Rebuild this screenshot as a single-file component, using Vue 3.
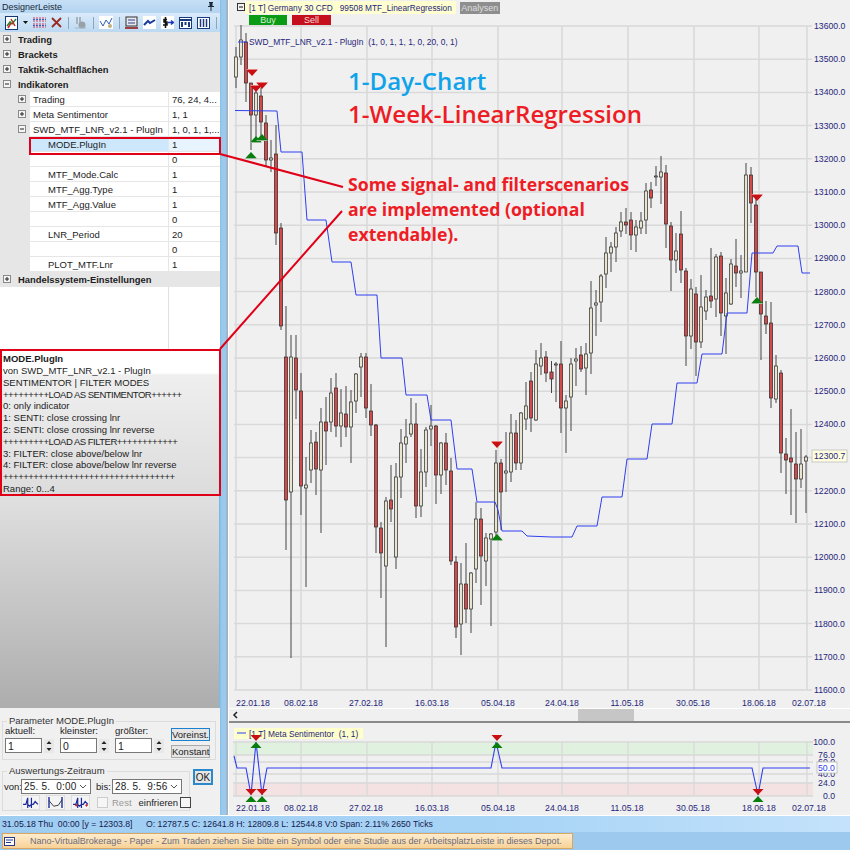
<template>
  <div class="app">
    <div class="main">
      <aside class="left">
        <div class="dock-title">
          <span>DesignerLeiste</span>
          <svg class="pin" width="8" height="9" viewBox="0 0 8 9"><path d="M2 0h4v1H5.500v3H7v1H4.500v4h-1V5H1V4h1.500V1H2z" fill="#1a2a3a" /></svg>
        </div>
        <div class="toolbar">
          <svg class="tb" width="13" height="14" viewBox="0 0 13 14"><rect x=".5" y=".5" width="12" height="13" fill="#fff" stroke="#123a70" /><path d="M2 10l3-4 2 2 4-5" fill="none" stroke="#1a8a2a" stroke-width="1.500" /><path d="M6 3l4 7M3 12l3-5" fill="none" stroke="#d02020" stroke-width="1.500" /></svg>
          <svg class="tb caret" width="5" height="3" viewBox="0 0 5 3"><path d="M0 0h5L2.500 3z" fill="#111" /></svg>
          <svg class="tb" width="13" height="12" viewBox="0 0 13 12"><path d="M0 1h13M0 4h13M0 7h13M0 10h13" stroke="#d04060" stroke-dasharray="2 1" /><path d="M0 2.500h13M0 8.500h13" stroke="#4060c0" stroke-dasharray="2 1" /></svg>
          <svg class="tb" width="11" height="11" viewBox="0 0 11 11"><path d="M1 1l9 9M10 1l-9 9" stroke="#9a2a20" stroke-width="1.800" /></svg>
          <i class="sep"></i>
          <svg class="tb" width="13" height="13" viewBox="0 0 13 13"><path d="M2 1h2v7H2zM5 1h2v6H5z" fill="#a8b4bc" /><circle cx="8" cy="9" r="3.500" fill="#98a0a8" /><path d="M1 12h11" stroke="#a8b4bc" /></svg>
          <i class="sep"></i>
          <svg class="tb" width="14" height="13" viewBox="0 0 14 13"><rect width="14" height="13" fill="#fff" /><path d="M1 5l3 5 3-6 3 4 3-6" fill="none" stroke="#3060b0" /><circle cx="11" cy="10" r="2" fill="#c0b080" /></svg>
          <i class="sep"></i>
          <svg class="tb" width="13" height="13" viewBox="0 0 13 13"><rect x="1" y="1" width="11" height="9" fill="#e8e8f0" stroke="#333" /><path d="M3 4h7M3 7h7" stroke="#304080" /><path d="M0 11h13v2H0z" fill="#a04040" /></svg>
          <svg class="tb" width="13" height="13" viewBox="0 0 13 13"><rect width="13" height="13" fill="#fff" /><path d="M1 9l4-4 2 2 5-3" fill="none" stroke="#1a3aa0" stroke-width="2" /></svg>
          <svg class="tb" width="13" height="13" viewBox="0 0 13 13"><rect width="13" height="13" fill="#fff" /><path d="M6 3.500H3v2.500h3v3H2M4.500 1v11" fill="none" stroke="#111" stroke-width="1.500" /><path d="M7 6.500h5M10 4.500l2.500 2-2.500 2" fill="none" stroke="#1a3ac0" stroke-width="1.500" /></svg>
          <svg class="tb" width="13" height="12" viewBox="0 0 13 12"><rect x=".5" y=".5" width="12" height="11" fill="#fff" stroke="#1a3a80" /><path d="M1 3h11" stroke="#1a3a80" stroke-width="2" /><path d="M3 5v5M6.500 5v3M10 5v5" stroke="#1a3a80" stroke-width="2" /></svg>
          <svg class="tb" width="13" height="12" viewBox="0 0 13 12"><rect x=".5" y=".5" width="12" height="11" fill="#fff" stroke="#1a3a80" /><path d="M3.500 2v8M6.500 2v8M9.500 2v8" stroke="#1a3a80" stroke-width="1.500" /></svg>
          <i class="sep"></i>
          <svg class="tb" width="10" height="14" viewBox="0 0 10 14"><rect x=".5" y=".5" width="9" height="13" fill="#fff" stroke="#1a3a80" /><path d="M1 3h8" stroke="#1a3a80" /><circle cx="6" cy="9" r="2.500" fill="#203060" /></svg>
        </div>

        <div class="tree">
          <div v-for="(row, i) in rows" :key="i" :class="['row', 'lvl' + row.level, { selected: row.selected }]">
            <svg v-if="row.toggle" class="toggle" width="8" height="8" viewBox="0 0 8 8">
              <rect x=".5" y=".5" width="7" height="7" fill="#f4f4f4" stroke="#8a8a8a" />
              <path :d="row.toggle === '+' ? 'M2 4h4M4 2v4' : 'M2 4h4'" stroke="#222" />
            </svg>
            <template v-if="row.level === 0">
              <span class="group-name">{{ row.label }}</span>
            </template>
            <template v-else>
              <span class="cell-name">{{ row.label }}</span>
              <span class="cell-value">{{ row.value }}</span>
            </template>
          </div>
          <div class="tree-empty"><span></span></div>
        </div>

        <div class="desc">
          <div class="desc-title">MODE.PlugIn</div>
          <div v-for="line in descLines" :key="line" :class="['desc-line', { plus: line.startsWith('+') }]">{{ line }}</div>
        </div>
        <div class="grey-fill"></div>

        <div class="params">
          <div class="param-top">
            <fieldset class="box">
              <legend>Parameter MODE.PlugIn</legend>
              <div class="spin-row">
                <div v-for="s in spins" :key="s.label" class="spin">
                  <label>{{ s.label }}</label>
                  <div class="spin-ctl">
                    <span class="field">{{ s.value }}</span>
                    <span class="arrows">
                      <svg width="10" height="7" viewBox="0 0 10 7"><path d="M5 2l2.500 3h-5z" fill="#222" /></svg>
                      <svg width="10" height="7" viewBox="0 0 10 7"><path d="M5 5L2.500 2h5z" fill="#222" /></svg>
                    </span>
                  </div>
                </div>
                <div class="param-buttons">
                  <button class="btn focus">Voreinst.</button>
                  <button class="btn">Konstant</button>
                </div>
              </div>
            </fieldset>
          </div>
          <div class="param-bottom">
            <fieldset class="box range">
              <legend>Auswertungs-Zeitraum</legend>
              <div class="date-row">
                <label class="von">von:</label>
                <span class="field date">25. 5. &nbsp;0:00
                  <svg width="8" height="5" viewBox="0 0 8 5"><path d="M1 1l3 3 3-3" fill="none" stroke="#555" /></svg>
                </span>
                <label class="bis">bis:</label>
                <span class="field date">28. 5. &nbsp;9:56
                  <svg width="8" height="5" viewBox="0 0 8 5"><path d="M1 1l3 3 3-3" fill="none" stroke="#555" /></svg>
                </span>
              </div>
              <div class="opt-row">
                <span class="mini"><svg width="18" height="14" viewBox="0 0 18 14"><path d="M1 9h3l2-7v11M6 9l2 2 2-2V2v11M10 9h2l2-3 3 3" fill="none" stroke="#1a2a9a" stroke-width="1.300" /></svg></span>
                <span class="mini"><svg width="18" height="14" viewBox="0 0 18 14"><path d="M2 1v12M16 1v12" stroke="#1a2a9a" stroke-width="1.500" /><path d="M2 5l5 6 5-1 4-6" fill="none" stroke="#333" /></svg></span>
                <span class="mini"><svg width="18" height="14" viewBox="0 0 18 14"><path d="M1 9h3l2-7v11M6 9l2 2 2-2V2v11M10 9h2l2-3 3 3" fill="none" stroke="#1a2a9a" stroke-width="1.300" /><path d="M3 10h3M14 10h3M4.500 8.500v3M15.500 8.500v3" stroke="#d02020" /></svg></span>
                <span class="check-wrap off"><i class="check"></i>Rest</span>
                <span class="check-wrap">einfrieren<i class="check dark"></i></span>
              </div>
            </fieldset>
            <button class="btn ok">OK</button>
          </div>
        </div>
      </aside>

      <div class="edge"></div>

      <section class="right">
        <div class="chart-head">
          <svg class="collapse" width="8" height="8" viewBox="0 0 8 8"><rect x=".5" y=".5" width="7" height="7" fill="#f4f4f4" stroke="#333" /><path d="M2 4h4" stroke="#111" /></svg>
          <div class="head-col">
            <div class="head-line">
              <span class="title-tag">[1 T] Germany 30 CFD &nbsp; 99508 MTF_LinearRegression</span>
              <span class="analysen">Analysen</span>
            </div>
            <div class="trade-btns">
              <span class="buy">Buy</span>
              <span class="sell">Sell</span>
            </div>
          </div>
        </div>

        <svg class="chart" width="621" height="682" viewBox="229 26 621 682">
          <rect x="229" y="26" width="621" height="682" fill="#f0f0f0" />
          <g stroke="#d9d9d9" stroke-width="1.500">
            <line v-for="p in priceAxis" :key="p.label" x1="234" x2="812" :y1="p.y" :y2="p.y" />
            <line v-for="x in gridX" :key="x" :x1="x" :x2="x" y1="26" y2="690" />
          </g>
          <g v-for="c in candles" :key="c.x">
            <line :x1="c.x" :x2="c.x" :y1="c.wt" :y2="c.wb" stroke="#444" />
            <rect :x="c.x - 1.600" :y="c.bt" width="3.200" :height="c.bb - c.bt" :fill="c.down ? '#d24a4a' : '#e8e4d0'" stroke="#2a2a2a" stroke-width="0.700" />
          </g>
          <polyline :points="mainLine" fill="none" stroke="#2f3ff0" stroke-width="1" />
          <g v-for="m in redMarks" :key="'r' + m[0] + m[1]">
            <path :d="downTri(m[0], m[1])" fill="#c80f14" />
            <rect :x="m[0] - 5.500" :y="m[1] - 4" width="11" height="1" fill="#e88080" />
          </g>
          <g v-for="m in greenMarks" :key="'g' + m[0] + m[1]">
            <path :d="upTri(m[0], m[1])" fill="#0a7d0f" />
            <rect :x="m[0] - 5.500" :y="m[1] + 3" width="11" height="1" fill="#9ab89a" />
          </g>
          <g class="axis">
            <text v-for="p in priceAxis" :key="p.label" x="814" :y="p.y + 3">{{ p.label }}</text>
            <text v-for="d in dates" :key="d.label" :x="d.x" y="706" text-anchor="middle">{{ d.label }}</text>
          </g>
          <line x1="238" x2="247" y1="42" y2="42" stroke="#2f3ff0" />
          <text class="legend" x="249" y="45">SWD_MTF_LNR_v2.1 - PlugIn &#160;(1, 0, 1, 1, 1, 0, 20, 0, 1)</text>
          <rect x="812" y="450" width="35" height="12" fill="#ffffdf" stroke="#c8c8c8" />
          <text class="axis-tag" x="814" y="459">12300.7</text>
        </svg>

        <div class="scrollbar">
          <svg width="6" height="8" viewBox="0 0 6 8"><path d="M5 1L2 4l3 3" fill="none" stroke="#222" stroke-width="1.500" /></svg>
          <div class="thumb"></div>
        </div>

        <svg class="lower" width="621" height="88" viewBox="229 726 621 88">
          <rect x="229" y="726" width="621" height="88" fill="#f0f0f0" />
          <rect x="233" y="742" width="580" height="13" fill="#e0f1df" />
          <rect x="233" y="783" width="580" height="13" fill="#f4e2e2" />
          <g stroke="#d9d9d9" stroke-width="1.300">
            <line v-for="l in lowerAxis" :key="l.label" x1="233" x2="813" :y1="l.y" :y2="l.y" />
            <line v-for="x in gridX" :key="x" :x1="x" :x2="x" y1="742" y2="796" />
          </g>
          <rect x="234" y="728" width="129" height="11" fill="#ffffcc" />
          <line x1="237" x2="246" y1="733" y2="733" stroke="#2f3ff0" />
          <text class="legend" x="249" y="737">[1 T] Meta Sentimentor &#160;(1, 1)</text>
          <polyline :points="lowerLine" fill="none" stroke="#2f3ff0" stroke-width="1.100" />
          <path v-for="x in lowerTopMarks" :key="'t' + x" :d="downTri(x, 738)" fill="#c80f14" />
          <path v-for="x in lowerTopMarks" :key="'u' + x" :d="upTri(x, 745)" fill="#0a7d0f" />
          <path v-for="x in lowerLowMarks" :key="'l' + x" :d="downTri(x, 792)" fill="#c80f14" />
          <path v-for="x in lowerLowMarks" :key="'m' + x" :d="upTri(x, 799)" fill="#0a7d0f" />
          <g class="axis">
            <text v-for="l in lowerAxis" :key="l.label" x="835" :y="l.y + 3" text-anchor="end">{{ l.label }}</text>
            <text v-for="d in dates" :key="d.label" :x="d.x" y="811" text-anchor="middle">{{ d.label }}</text>
          </g>
          <rect x="817" y="762" width="20" height="11" fill="#fff" stroke="#c4c4c4" />
          <text class="axis-tag blue" x="818" y="771">50.0</text>
        </svg>
      </section>
    </div>

    <div class="status">
      <span class="s-left">31.05.18 Thu &nbsp;00:00 [y = 12303.8]</span>
      <span>O: 12787.5 C: 12641.8 H: 12809.8 L: 12544.8 V:0 Span: 2.11% 2650 Ticks</span>
    </div>
    <div class="taskbar">
      <div class="task">
        <svg width="11" height="9" viewBox="0 0 11 9"><rect x=".5" y=".5" width="10" height="8" fill="#fff" stroke="#2a3a8a" /><path d="M2 3h7M2 5.500h5" stroke="#2a3a8a" /></svg>
        <span>Nano-VirtualBrokerage - Paper - Zum Traden ziehen Sie bitte ein Symbol oder eine Studie aus der ArbeitsplatzLeiste in dieses Depot.</span>
      </div>
    </div>

    <!-- annotations drawn over the screenshot -->
    <svg class="marks" width="850" height="850" viewBox="0 0 850 850">
      <rect x="30" y="138" width="190" height="16" fill="none" stroke="#e00018" stroke-width="2" />
      <rect x="1" y="350" width="219" height="145" fill="none" stroke="#e00018" stroke-width="2" />
      <path d="M220 154L343 187M220 349L342 211" stroke="#e00018" stroke-width="2" fill="none" />
    </svg>
    <div class="note note-a">
      <div class="blue-t">1-Day-Chart</div>
      <div class="red-t">1-Week-LinearRegression</div>
    </div>
    <div class="note note-b">Some signal- and filterscenarios<br />are implemented (optional<br />extendable).</div>
  </div>
</template>

<script setup>
const rows = [
  { level: 0, toggle: '+', label: 'Trading' },
  { level: 0, toggle: '+', label: 'Brackets' },
  { level: 0, toggle: '+', label: 'Taktik-Schaltflächen' },
  { level: 0, toggle: '-', label: 'Indikatoren' },
  { level: 1, toggle: '+', label: 'Trading', value: '76, 24, 4...' },
  { level: 1, toggle: '+', label: 'Meta Sentimentor', value: '1, 1' },
  { level: 1, toggle: '-', label: 'SWD_MTF_LNR_v2.1 - PlugIn', value: '1, 0, 1, 1,...' },
  { level: 2, label: 'MODE.PlugIn', value: '1', selected: true },
  { level: 2, label: '', value: '0' },
  { level: 2, label: 'MTF_Mode.Calc', value: '1' },
  { level: 2, label: 'MTF_Agg.Type', value: '1' },
  { level: 2, label: 'MTF_Agg.Value', value: '1' },
  { level: 2, label: '', value: '0' },
  { level: 2, label: 'LNR_Period', value: '20' },
  { level: 2, label: '', value: '0' },
  { level: 2, label: 'PLOT_MTF.Lnr', value: '1' },
  { level: 0, toggle: '+', label: 'Handelssystem-Einstellungen' }
]

const descLines = [
  'von SWD_MTF_LNR_v2.1 - PlugIn',
  'SENTIMENTOR | FILTER MODES',
  '+++++++++LOAD AS SENTIMENTOR++++++',
  '0: only indicator',
  '1: SENTI: close crossing lnr',
  '2: SENTI: close crossing lnr reverse',
  '+++++++++LOAD AS FILTER++++++++++++',
  '3: FILTER: close above/below lnr',
  '4: FILTER: close above/below lnr reverse',
  '++++++++++++++++++++++++++++++++++',
  'Range: 0...4'
]

const spins = [
  { label: 'aktuell:', value: '1' },
  { label: 'kleinster:', value: '0' },
  { label: 'größter:', value: '1' }
]

// x, wick top, wick bottom, body top, body bottom, down
const raw = [
  [236,47,88,57,77,0],[241,25,65,40,57,0],[246,33,102,42,83,1],[251,83,150,83,115,1],[256,90,140,93,115,0],
  [261,88,137,96,122,1],[266,115,167,123,160,1],[271,140,172,158,160,0],[276,125,245,154,233,1],[281,223,330,228,326,1],
  [286,306,550,357,500,1],[291,335,658,357,492,0],[296,335,419,358,390,1],[301,373,515,391,486,1],[306,457,587,485,488,0],
  [311,430,483,443,470,0],[316,432,495,442,469,1],[321,408,533,422,470,0],[326,397,465,422,431,1],[331,378,432,393,422,0],
  [336,373,437,388,426,1],[341,389,447,413,426,0],[346,386,437,414,427,1],[351,390,463,402,427,0],[356,373,413,374,401,0],
  [361,353,397,357,367,0],[366,353,418,357,408,1],[371,384,436,411,425,1],[376,424,553,425,527,1],[381,522,598,528,553,1],
  [386,497,647,501,566,0],[391,465,522,500,509,1],[396,463,569,477,557,0],[401,429,498,443,477,0],[406,419,463,437,444,0],
  [411,398,437,424,434,0],[416,403,518,424,506,1],[421,449,517,472,506,0],[426,427,487,430,472,0],[431,405,446,426,429,0],
  [436,425,504,426,475,1],[441,442,494,443,475,0],[446,433,485,443,470,1],[451,458,565,471,561,1],[456,556,638,562,627,1],
  [461,563,655,584,624,0],[466,543,623,584,609,1],[471,572,633,573,609,0],[476,502,583,519,569,0],[481,508,605,519,556,1],
  [486,533,586,538,561,0],[491,533,626,534,539,0],[496,450,537,463,532,0],[501,459,530,463,492,1],[506,432,492,471,473,0],
  [511,414,482,433,472,0],[516,420,470,433,463,1],[521,412,470,413,463,0],[526,382,430,406,419,0],[531,372,432,381,418,1],
  [536,350,421,364,420,0],[541,343,375,358,366,0],[546,351,382,357,373,1],[551.500,361,393,372,379,1],[556,362,402,364,365,0],
  [561,341,433,364,408,1],[566,395,453,401,408,0],[571,358,431,364,397,0],[576,348,386,359,361,0],[581,346,372,355,369,1],
  [586,343,395,354,368,0],[591,281,374,308,353,0],[596,290,336,303,305,0],[601,274,322,276,302,0],[606,237,288,253,274,0],
  [611,242,272,247,253,0],[616,227,262,233,247,0],[621,212,237,222,231,0],[626,208,234,222,225,1],[631,212,250,220,235,1],
  [636,220,252,227,235,0],[641,212,234,221,228,0],[646,183,234,191,220,0],[651,182,208,190,198,1],[656,166,186,176,177,0],
  [661,156,204,172,177,0],[666,165,248,173,224,1],[671,222,291,226,260,1],[676,233,273,251,260,0],[681,211,283,234,270,1],
  [686,268,366,271,336,1],[691,279,349,289,336,0],[696,287,376,294,342,1],[701,275,348,307,342,0],[706,290,320,297,311,0],
  [711,248,308,296,301,1],[716,254,317,257,299,0],[721,252,336,256,313,1],[726,278,354,293,316,0],[731,259,305,264,304,0],
  [736,239,287,266,273,1],[741,255,298,271,273,0],[746,163,272,175,272,0],[751,167,223,175,203,1],[756,195,297,205,272,1],
  [761,272,360,272,314,1],[766,301,334,316,324,1],[771,302,408,323,398,1],[776,355,403,366,399,0],[781,370,473,373,453,1],
  [786,438,494,454,460,1],[791,409,515,458,462,1],[796,432,523,464,479,1],[801,429,488,464,479,0],[806,455,513,457,461,0]
]
const candles = raw.map(([x, wt, wb, bt, bb, d]) => ({ x, wt, wb, bt, bb, down: d === 1 }))

const mainLine = '235,110.500 277,111 281,152 302,152 307,220 326,220 332,262 351,262 356,295 377,295 381,358 402,358 406,395 427,395 431,420 451,420 457,469 472,469 477,502 495,502 498,510 502,531 522,531 527,536 552,537 572,537 577,526 597,526 602,497 622,497 627,459 647,459 652,424 672,424 677,383 697,383 702,354 722,354 727,313 747,313 752,253 773,253 777,246 798,246 802,273 810,273'
const lowerLine = '234,756 237,768 246,768 251,795 256,742 262,795 267,768 491,768 496,742 502,768 752,768 758,795 763,768 810,768'

const priceAxis = []
for (let i = 0; i <= 20; i++) {
  const price = 13600 - i * 100
  priceAxis.push({ label: price.toFixed(1), y: 26 + i * 33.2 })
}

const gridX = [236, 301, 367, 432, 498, 562, 628, 694, 759, 807]
const dates = [
  { label: '22.01.18', x: 253 }, { label: '08.02.18', x: 301 }, { label: '27.02.18', x: 366 },
  { label: '16.03.18', x: 432 }, { label: '05.04.18', x: 498 }, { label: '24.04.18', x: 562 },
  { label: '11.05.18', x: 627 }, { label: '30.05.18', x: 693 }, { label: '18.06.18', x: 759 },
  { label: '02.07.18', x: 809 }
]
const lowerAxis = [
  { label: '100.0', y: 742 }, { label: '76.0', y: 755 }, { label: '60.0', y: 762 },
  { label: '40.0', y: 774 }, { label: '24.0', y: 783 }, { label: '0.0', y: 796 }
]

const redMarks = [[252, 73], [256, 89], [262, 86], [497, 445], [757, 198]]
const greenMarks = [[251, 155], [256, 139], [262, 137], [497, 537], [757, 300]]
const lowerTopMarks = [256, 497]
const lowerLowMarks = [251, 262, 758]

function downTri(x, y) {
  return `M${x - 5.5} ${y - 3}h11l-5.500 6z`
}
function upTri(x, y) {
  return `M${x - 5.5} ${y + 3}h11l-5.500 -6z`
}
</script>

<style>
html, body { margin: 0; background: #f0f0f0; }
</style>

<style scoped>
.app {
  position: relative;
  width: 850px;
  height: 850px;
  overflow: hidden;
  display: flex;
  flex-direction: column;
  font-family: "Liberation Sans", Arial, sans-serif;
  font-size: 9.500px;
  color: #1c1c1c;
}

.main {
  height: 815px;
  display: flex;
}

.left {
  width: 220px;
  display: flex;
  flex-direction: column;
  background: #f0f0f0;
}

.edge {
  width: 9px;
  background: linear-gradient(90deg, #7fc0e8 0, #9cc8ec 20%, #9cc8ec 70%, #7a8a9a 80%, #fff 90%);
}

.dock-title {
  height: 13px;
  display: flex;
  justify-content: space-between;
  align-items: center;
  padding: 0 5px 0 2px;
  background: linear-gradient(#c6dff5, #b4d4f0);
  color: #202a3a;
  font-size: 9px;
}

.toolbar {
  height: 19px;
  display: flex;
  align-items: center;
  padding-left: 5px;
  background: linear-gradient(#d9eafa, #bcd9f2);
  overflow: hidden;
}

.tb { flex: none; margin-right: 5px; }
.caret { margin-right: 5px; }
.sep {
  flex: none;
  width: 1px;
  height: 12px;
  margin: 0 5px 0 1px;
  background: #8fa6ba;
}

.tree {
  height: 317px;
  background: #fff;
  display: flex;
  flex-direction: column;
}

.row {
  height: 15px;
  flex: none;
  display: flex;
  align-items: center;
  background: #e6e6e6;
  box-sizing: border-box;
  position: relative;
}
.row:last-of-type { height: 14px; }

.toggle { position: absolute; top: 3px; }
.lvl0 .toggle { left: 3px; }
.lvl1 .toggle { left: 18px; }

.group-name {
  padding-left: 18px;
  font-weight: 700;
  font-size: 9.400px;
}

.cell-name {
  margin-left: 30px;
  width: 138px;
  height: 100%;
  line-height: 15px;
  background: #fff;
  border-bottom: 1px solid #e6e6e6;
  box-sizing: border-box;
  white-space: nowrap;
  overflow: hidden;
}

.lvl1 .cell-name { padding-left: 3px; }
.lvl2 .cell-name { padding-left: 18px; }

.cell-value {
  margin-left: 1px;
  flex: 1;
  min-width: 0;
  height: 100%;
  line-height: 15px;
  padding-left: 3px;
  background: #fff;
  border-bottom: 1px solid #e6e6e6;
  box-sizing: border-box;
  white-space: nowrap;
  overflow: hidden;
}

.selected .cell-name { background: #cde8fc; }
.selected .cell-value { background: #e8f4fd; }

.tree-empty {
  flex: 1;
  display: flex;
  justify-content: flex-start;
}
.tree-empty span {
  margin-left: 168px;
  width: 1px;
  background: #e0e0e0;
}

.desc {
  height: 146px;
  padding: 3px 3px 0;
  box-sizing: border-box;
  background: linear-gradient(#fff 0, #fff 16%, #efefef 18%, #dcdcdc 100%);
  line-height: 11.800px;
  white-space: nowrap;
  overflow: hidden;
}
.desc-title { font-weight: 700; height: 13px; line-height: 13px; }
.plus { letter-spacing: -0.5px; }

.grey-fill {
  height: 213px;
  background: linear-gradient(#e0e0e0, #adadad);
  border-right: 1px solid #79bce6;
  box-sizing: border-box;
}

.params {
  flex: 1;
  background: #f0f0f0;
  position: relative;
  padding: 8px 0 0 2px;
  box-sizing: border-box;
}

.box {
  margin: 0;
  padding: 0 2px 4px;
  border: 1px solid #dcdcdc;
  min-width: 0;
}
.box legend {
  padding: 0 2px;
  margin-left: 2px;
  font-size: 9.500px;
  line-height: 10px;
  color: #333;
}

.param-top { width: 214px; height: 50px; }
.param-top .box { height: 44px; box-sizing: border-box; }

.spin-row { display: flex; gap: 6px; }
.spin label { display: block; line-height: 10px; margin-bottom: 2px; }
.spin-ctl { display: flex; align-items: center; gap: 2px; }

.field {
  display: inline-flex;
  align-items: center;
  border: 1px solid #777;
  background: #fff;
  box-sizing: border-box;
  height: 15px;
  padding-left: 2px;
  font-size: 10.500px;
}
.spin .field { width: 37px; }

.arrows { display: flex; flex-direction: column; }
.arrows svg { display: block; background: #e8e8e8; border: 0; }

.param-buttons {
  position: absolute;
  left: 171px;
  top: 20px;
  display: flex;
  flex-direction: column;
  gap: 4px;
}

.btn {
  width: 39px;
  height: 13px;
  padding: 0;
  border: 1px solid #aaa;
  background: #e6e6e6;
  font: 9.500px "Liberation Sans", Arial, sans-serif;
  color: #222;
}
.btn.focus { border: 1px solid #1a80d0; }
.ok {
  width: 20px;
  height: 16px;
  margin-top: 3px;
  border: 2px solid #2a88cc;
  font-size: 10px;
}

.param-bottom { display: flex; gap: 3px; align-items: flex-start; }
.range { width: 188px; height: 45px; box-sizing: border-box; }

.date-row { display: flex; align-items: center; margin-top: 3px; }
.von { width: 17px; margin-left: -1px; }
.date { width: 70px; justify-content: space-between; padding-right: 3px; letter-spacing: 0.2px; font-size: 10px; }
.bis { margin-left: 5px; width: 16px; }

.opt-row { display: flex; align-items: center; margin-top: 1px; padding-left: 16px; }
.mini {
  width: 19px;
  height: 15px;
  margin-right: 6px;
  background: #f4f4f4;
  border: 1px solid #ddd;
  box-sizing: border-box;
  display: flex;
  align-items: center;
  justify-content: center;
}
.mini svg { width: 17px; height: 13px; }

.check-wrap { display: inline-flex; align-items: center; gap: 2px; margin-left: 8px; font-size: 9.500px; }
.check-wrap.off { color: #999; margin-left: 1px; gap: 4px; }
.check-wrap:last-child { margin-left: 7px; }
.check { width: 9px; height: 9px; border: 1px solid #ccc; background: #f6f6f6; }
.check.dark { border-color: #444; }

.right {
  flex: 1;
  display: flex;
  flex-direction: column;
  background: #f0f0f0;
  min-width: 0;
}

.chart-head {
  height: 26px;
  flex: none;
  display: flex;
  padding-left: 8px;
  gap: 8px;
  box-sizing: border-box;
  background: #f0f0f0;
}
.collapse { margin-top: 3px; flex: none; }
.head-col { display: flex; flex-direction: column; margin-left: -8px; }
.head-line { display: flex; align-items: center; gap: 4px; height: 15px; }
.title-tag {
  background: #ffffd0;
  height: 13px;
  line-height: 14px;
  padding: 0 4px 0 4px;
  font-size: 8.300px;
  color: #26267a;
  white-space: nowrap;
}
.analysen {
  background: #8e8e8e;
  color: #dedede;
  width: 40px;
  height: 12px;
  line-height: 12px;
  text-align: center;
  font-size: 9px;
}
.trade-btns { display: flex; gap: 5px; padding-left: 4px; }
.buy, .sell {
  width: 38px;
  height: 10px;
  line-height: 10px;
  text-align: center;
  color: #d6f0d6;
  font-size: 9px;
}
.buy { background: #0a9a14; }
.sell { background: #c40f1c; color: #f6d8d8; width: 39px; }

.chart, .lower { display: block; flex: none; overflow: visible; }

.axis text {
  font-size: 8.700px;
  fill: #26267a;
}
.legend {
  font-size: 8.400px;
  fill: #26267a;
}
.axis-tag {
  font-size: 8.700px;
  fill: #26267a;
}
.axis-tag.blue { fill: #2f3ff0; }

.scrollbar {
  height: 15px;
  flex: none;
  display: flex;
  align-items: center;
  padding-left: 3px;
  border-top: 1px solid #fff;
  box-sizing: border-box;
  position: relative;
  border-bottom: 2px solid #8a8a8a;
  margin-bottom: 3px;
}
.thumb {
  width: 56px;
  height: 12px;
  margin-left: 340px;
  background: #c6c6c6;
}

.status {
  height: 17px;
  display: flex;
  align-items: center;
  padding-left: 2px;
  border-top: 1px solid #fff;
  box-sizing: border-box;
  background: linear-gradient(90deg, #9fcdf2, #a8d4f6 60%, #c4e2fb);
  color: #14204e;
  font-size: 8.700px;
  white-space: nowrap;
}
.s-left { width: 144px; }

.taskbar {
  flex: 1;
  background: #9dc9ee;
  padding: 1px 0 0 2px;
}
.task {
  width: 571px;
  height: 16px;
  display: flex;
  align-items: center;
  gap: 15px;
  padding-left: 1px;
  box-sizing: border-box;
  border: 1px solid #d8a860;
  background: linear-gradient(#fdeccd, #f8d296);
  color: #6c6c80;
  font-size: 9px;
  white-space: nowrap;
}

.marks {
  position: absolute;
  inset: 0;
  pointer-events: none;
}

.note {
  position: absolute;
  font-family: "Open Sans", sans-serif;
  font-weight: 600;
  white-space: nowrap;
}
.note-a {
  left: 348px;
  top: 64px;
  font-size: 24.100px;
  line-height: 33px;
}
.blue-t { color: #11a3ea; }
.red-t { color: #ee1c25; }
.note-b {
  left: 348px;
  top: 172px;
  font-size: 17.700px;
  font-weight: 700;
  line-height: 25px;
  color: #ee1c25;
}
</style>
